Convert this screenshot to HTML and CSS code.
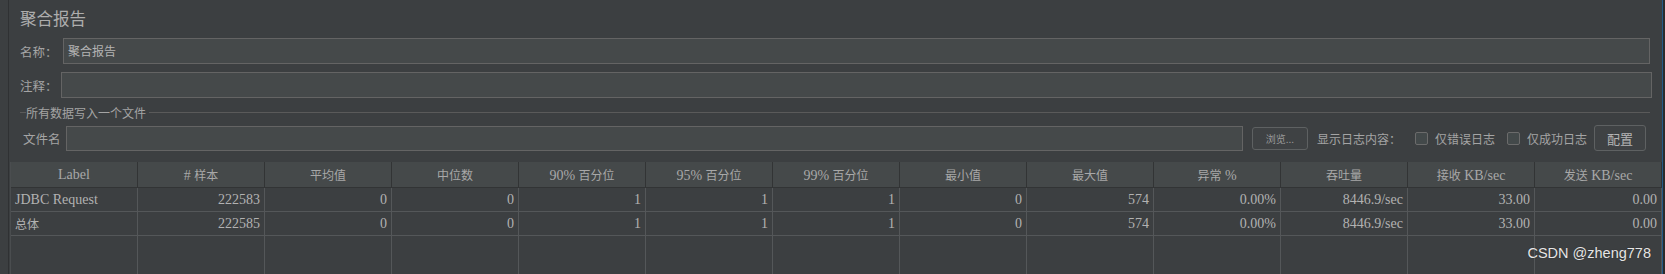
FILE: index.html
```html
<!DOCTYPE html>
<html lang="zh">
<head>
    <meta charset="UTF-8">
    <title>聚合报告</title>
    <link rel="stylesheet" href="styles.css">
</head>
<body>
<div class="window">
    <div class="gutter"></div>
    <div class="panel">
        <!-- form part -->
        <div class="form">
            <div class="title">聚合报告</div>
            <div class="row name-row">
                <label class="label name-label">名称：</label>
                <div class="field">聚合报告</div>
            </div>
            <div class="row comment-row">
                <label class="label comment-label">注释：</label>
                <div class="field"></div>
            </div>
            <div class="group-title"><span>所有数据写入一个文件</span></div>
            <div class="row file-row">
                <label class="label file-label">文件名</label>
                <div class="field file-field"></div>
                <button class="btn browse">浏览...</button>
                <span class="log-text">显示日志内容：</span>
                <span class="check"></span><span class="check-text">仅错误日志</span>
                <span class="check"></span><span class="check-text">仅成功日志</span>
                <button class="btn config">配置</button>
            </div>
        </div>

        <!-- results table -->
        <div class="table">
            <div class="cell head">Label</div>
            <div class="cell head"># <span class="cjk">样本</span></div>
            <div class="cell head"><span class="cjk">平均值</span></div>
            <div class="cell head"><span class="cjk">中位数</span></div>
            <div class="cell head">90% <span class="cjk">百分位</span></div>
            <div class="cell head">95% <span class="cjk">百分位</span></div>
            <div class="cell head">99% <span class="cjk">百分位</span></div>
            <div class="cell head"><span class="cjk">最小值</span></div>
            <div class="cell head"><span class="cjk">最大值</span></div>
            <div class="cell head"><span class="cjk">异常</span> %</div>
            <div class="cell head"><span class="cjk">吞吐量</span></div>
            <div class="cell head"><span class="cjk">接收</span> KB/sec</div>
            <div class="cell head"><span class="cjk">发送</span> KB/sec</div>

            <div class="cell text">JDBC Request</div>
            <div class="cell">222583</div>
            <div class="cell">0</div>
            <div class="cell">0</div>
            <div class="cell">1</div>
            <div class="cell">1</div>
            <div class="cell">1</div>
            <div class="cell">0</div>
            <div class="cell">574</div>
            <div class="cell">0.00%</div>
            <div class="cell">8446.9/sec</div>
            <div class="cell">33.00</div>
            <div class="cell">0.00</div>

            <div class="cell text"><span class="cjk">总体</span></div>
            <div class="cell">222585</div>
            <div class="cell">0</div>
            <div class="cell">0</div>
            <div class="cell">1</div>
            <div class="cell">1</div>
            <div class="cell">1</div>
            <div class="cell">0</div>
            <div class="cell">574</div>
            <div class="cell">0.00%</div>
            <div class="cell">8446.9/sec</div>
            <div class="cell">33.00</div>
            <div class="cell">0.00</div>

            <div class="cell empty"></div><div class="cell empty"></div><div class="cell empty"></div>
            <div class="cell empty"></div><div class="cell empty"></div><div class="cell empty"></div>
            <div class="cell empty"></div><div class="cell empty"></div><div class="cell empty"></div>
            <div class="cell empty"></div><div class="cell empty"></div><div class="cell empty"></div>
            <div class="cell empty"></div>

            <div class="watermark">CSDN @zheng778</div>
        </div>
    </div>
    <div class="edge"></div>
</div>
</body>
</html>
```

FILE: styles.css
```css
body {
    margin: 0;
    padding: 0;
    background-color: #3c3f41;
    color: #bbbbbb;
    font-family: "Noto Sans CJK SC", "Noto Sans", sans-serif;
    overflow: hidden;
}

.window {
    display: flex;
    height: 274px;
}

.gutter {
    width: 8px;
    border-right: 1px solid #2f3133;
}

.edge {
    width: 2px;
    border-left: 1px solid #245a86;
    background-color: #2b2b2b;
}

.panel {
    flex: 1;
    display: flex;
    flex-direction: column;
    min-width: 0;
}

.form {
    padding: 8px 0 0 11px;
    font-size: 12px;
}

.title {
    font-size: 16.5px;
    line-height: 20px;
    height: 20px;
    color: #adadad;
}

.row {
    display: flex;
    align-items: center;
    height: 26px;
}

.name-row {
    margin-top: 10px;
    margin-right: 12px;
}

.comment-row {
    margin-top: 8px;
    margin-right: 10px;
}

.label {
    color: #a4a4a4;
    flex-shrink: 0;
    font-size: 12.5px;
}

.name-label {
    width: 43px;
}

.comment-label {
    width: 41px;
}

.file-label {
    padding-left: 3px;
    width: 43px;
}

.field {
    flex: 1;
    height: 24px;
    background-color: #45494a;
    border: 1px solid #646464;
    line-height: 24px;
    padding-left: 4px;
    color: #b4b4b4;
}

.group-title {
    display: flex;
    align-items: center;
    height: 14px;
    margin-top: 7px;
    margin-right: 12px;
    color: #a4a4a4;
}

.group-title::before {
    content: "";
    width: 6px;
    border-top: 1px solid #5a5a5a;
}

.group-title::after {
    content: "";
    flex: 1;
    border-top: 1px solid #5a5a5a;
    margin-left: 3px;
}

.file-row {
    margin-top: 6px;
    margin-right: 16px;
}

.file-field {
    height: 23px;
    margin-right: 9px;
}

.btn {
    font-family: "Noto Sans CJK SC", sans-serif;
    background-color: #3f4244;
    border: 1px solid #5e6162;
    border-radius: 3px;
    color: #b4b4b4;
    padding: 0;
    flex-shrink: 0;
}

.browse {
    width: 56px;
    height: 23px;
    font-size: 10px;
    color: #9a9a9a;
    margin-right: 9px;
}

.log-text {
    color: #a4a4a4;
    margin-right: 14px;
    flex-shrink: 0;
}

.check {
    width: 11px;
    height: 11px;
    border: 1px solid #6b6b6b;
    border-radius: 2px;
    background-color: #43494a;
    margin-right: 7px;
    flex-shrink: 0;
}

.check-text {
    color: #a4a4a4;
    margin-right: 12px;
    flex-shrink: 0;
}

.check-text + .check-text {
    margin-right: 0;
}

.config {
    width: 52px;
    height: 26px;
    font-size: 13px;
    margin-left: -5px;
}

.table {
    position: relative;
    margin-top: 11px;
    margin-left: 1px;
    flex: 1;
    display: grid;
    grid-template-columns: repeat(13, 1fr);
    grid-template-rows: 26px 24px 24px 1fr;
    font-family: "Liberation Serif", "Noto Sans CJK SC", serif;
    font-size: 14px;
    border-left: 1px solid #4a4d4f;
}

.cell {
    border-right: 1px solid #545759;
    border-bottom: 1px solid #545759;
    text-align: right;
    padding-right: 4px;
    line-height: 23px;
    white-space: nowrap;
    overflow: hidden;
    color: #b2b2b2;
}

.cell.head {
    background-color: #45494a;
    border-right-color: #323435;
    border-bottom-color: #323435;
    text-align: center;
    padding-right: 0;
    line-height: 25px;
    color: #a8a8a8;
}

.cell.text {
    text-align: left;
    padding-left: 4px;
}

.cell.empty {
    border-bottom: none;
}

.cjk {
    font-family: "Noto Sans CJK SC", sans-serif;
    font-size: 12px;
}

.watermark {
    position: absolute;
    right: 11px;
    bottom: 13px;
    font-family: "Liberation Sans", Arial, sans-serif;
    font-size: 14.5px;
    color: #e6e6e6;
    text-shadow: 0 0 1px #222;
}
```
